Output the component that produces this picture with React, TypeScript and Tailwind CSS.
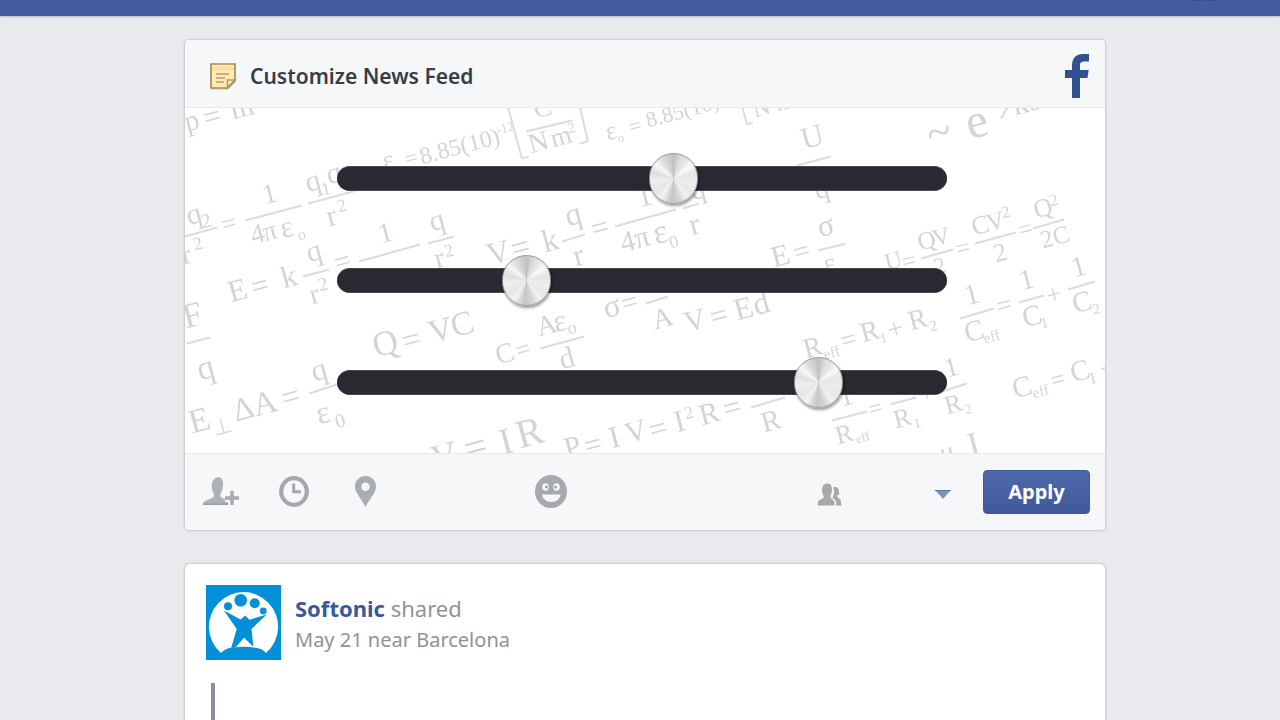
import { useState } from 'react'

type Glyph = [x: number, y: number, size: number, text: string]
type Stroke = [x1: number, y1: number, x2: number, y2: number]

// Chalkboard physics formulas, all written on a slope
const glyphs: Glyph[] = [
  [187, 131, 29, 'p'], [206, 128, 31, '='], [233, 119, 30, 'm'],
  [383, 108, 24, 'v'],
  [308, 192, 30, 'q'], [323, 195, 18, '1'], [329, 184, 30, 'q'], [329, 226, 30, 'r'], [339, 212, 18, '2'],
  [265, 204, 28, '1'], [224, 233, 26, '='], [189, 225, 30, 'q'], [203, 228, 20, '2'], [184, 264, 28, 'r'], [195, 250, 18, '2'],
  [253, 244, 28, '4'], [265, 241, 28, 'π'], [283, 238, 31, 'ε'], [299, 240, 16, 'o'],
  [381, 243, 28, '1'], [432, 231, 30, 'q'], [337, 272, 29, '='], [437, 268, 29, 'r'], [446, 257, 18, '2'],
  [231, 302, 31, 'E'], [254, 297, 31, '='], [284, 288, 31, 'k'], [309, 262, 30, 'q'], [312, 304, 29, 'r'], [320, 291, 19, '2'],
  [186, 328, 35, 'F'], [200, 380, 34, 'q'],
  [192, 433, 34, 'E'], [215, 435, 22, '⊥'], [236, 421, 32, 'Δ'], [256, 416, 33, 'A'], [284, 409, 33, '='],
  [314, 381, 31, 'q'], [319, 424, 32, 'ε'], [337, 428, 20, '0'],
  [376, 357, 35, 'Q'], [405, 352, 33, '='], [432, 343, 33, 'V'], [454, 337, 34, 'C'],
  [435, 470, 36, 'V'], [468, 462, 40, '='], [503, 454, 37, 'I'], [520, 448, 40, 'R'],
  [385, 169, 26, 'ε'], [407, 166, 22, '='], [422, 164, 24, '8.85(10)'], [498, 134, 13, '-12'],
  [536, 118, 27, 'C'], [531, 153, 28, 'N'], [553, 147, 27, 'm'], [569, 133, 15, '2'],
  [608, 140, 26, 'ε'], [619, 142, 12, 'o'], [631, 134, 22, '='], [648, 127, 22, '8.85(10)'], [755, 117, 24, 'N m'],
  [490, 265, 32, 'V'], [514, 260, 34, '='], [545, 252, 32, 'k'], [568, 226, 32, 'q'], [576, 266, 31, 'r'],
  [594, 239, 31, '='], [640, 207, 29, '1'], [623, 252, 29, '4'], [637, 248, 30, 'π'], [656, 244, 34, 'ε'], [671, 248, 18, '0'],
  [693, 200, 29, 'q'], [692, 235, 31, 'r'],
  [804, 149, 31, 'U'], [817, 199, 28, 'q'], [820, 237, 31, 'σ'], [796, 262, 29, '='], [774, 267, 30, 'E'], [826, 273, 28, 'ε'],
  [931, 149, 45, '~'], [970, 139, 49, 'e'], [1015, 115, 32, 'ks'],
  [887, 270, 24, 'U'], [904, 270, 25, '='], [920, 250, 25, 'Q'], [935, 246, 24, 'V'], [936, 274, 23, '2'], [958, 257, 25, '='],
  [974, 235, 26, 'C'], [989, 231, 25, 'V'], [1003, 218, 17, '2'], [996, 262, 26, '2'], [1021, 238, 25, '='],
  [1036, 218, 26, 'Q'], [1051, 206, 17, '2'], [1043, 248, 25, '2C'],
  [967, 305, 29, '1'], [967, 342, 29, 'C'], [985, 343, 15, 'eff'], [999, 315, 27, '='],
  [1022, 290, 29, '1'], [1025, 327, 29, 'C'], [1042, 328, 15, '1'], [1049, 304, 26, '+'],
  [1074, 277, 29, '1'], [1075, 313, 29, 'C'], [1094, 314, 15, '2'],
  [806, 358, 28, 'R'], [825, 359, 15, 'eff'], [843, 350, 28, '='], [863, 342, 28, 'R'], [881, 343, 15, '1'],
  [890, 339, 28, '+'], [911, 330, 28, 'R'], [931, 331, 15, '2'],
  [1015, 398, 29, 'C'], [1034, 398, 15, 'eff'], [1053, 389, 26, '='], [1073, 382, 29, 'C'], [1090, 384, 17, '1'],
  [842, 406, 26, '1'], [838, 444, 26, 'R'], [857, 443, 13, 'eff'], [871, 417, 24, '='], [896, 428, 26, 'R'], [915, 428, 14, '1'],
  [922, 402, 22, '+'], [947, 377, 27, '1'], [947, 414, 26, 'R'], [966, 414, 14, '2'],
  [942, 462, 28, 'μ'], [971, 456, 34, 'I'],
  [498, 364, 28, 'C'], [518, 359, 26, '='], [539, 336, 28, 'A'], [556, 332, 31, 'ε'], [569, 334, 18, 'o'], [562, 369, 30, 'd'],
  [606, 318, 32, 'σ'], [624, 313, 29, '='], [655, 329, 28, 'A'],
  [687, 332, 30, 'V'], [713, 327, 31, '='], [737, 320, 31, 'E'], [756, 315, 32, 'd'],
  [567, 458, 30, 'P'], [587, 456, 31, '='], [612, 448, 31, 'I'], [628, 443, 30, 'V'], [652, 440, 31, '='],
  [677, 432, 31, 'I'], [686, 419, 18, '2'], [702, 425, 30, 'R'], [726, 419, 31, '='], [764, 432, 29, 'R'],
]

const strokes: Stroke[] = [
  [308, 203, 357, 190], [245, 220, 302, 205], [185, 236, 217, 227], [359, 261, 420, 244], [428, 243, 454, 236],
  [303, 276, 329, 269], [187, 343, 210, 337], [309, 393, 337, 384], [526, 131, 572, 120], [562, 241, 585, 234],
  [615, 226, 676, 209], [683, 208, 699, 203], [797, 165, 831, 156], [818, 250, 846, 243], [921, 258, 953, 249],
  [975, 243, 1016, 232], [1033, 228, 1064, 219], [960, 318, 994, 308], [1019, 302, 1044, 295], [1068, 289, 1095, 281],
  [1101, 369, 1106, 367], [832, 420, 867, 411], [890, 404, 916, 397], [942, 391, 967, 383], [540, 348, 584, 336],
  [646, 303, 668, 296], [751, 407, 785, 397], [508, 107, 522, 158], [522, 158, 529, 156], [580, 107, 588, 141],
  [588, 141, 580, 143], [742, 105, 747, 124], [747, 124, 753, 122], [1001, 118, 1008, 106],
]

function FormulaBackdrop() {
  return (
    <svg
      viewBox="185 107 920 346"
      preserveAspectRatio="xMidYMid slice"
      className="pointer-events-none absolute inset-0 h-full w-full blur-[0.5px]"
      aria-hidden="true"
    >
      <g fill="#d4d4d4" className="font-['Liberation_Serif',serif]">
        {glyphs.map(([x, y, size, text], i) => (
          <text key={i} transform={`translate(${x} ${y}) rotate(-15)`} fontSize={size}>
            {text}
          </text>
        ))}
      </g>
      <g stroke="#dcdcdc" strokeWidth="2">
        {strokes.map(([x1, y1, x2, y2], i) => (
          <line key={i} x1={x1} y1={y1} x2={x2} y2={y2} />
        ))}
      </g>
    </svg>
  )
}

function NoteIcon() {
  return (
    <svg width="28" height="28" viewBox="0 0 28 28" aria-hidden="true">
      <defs>
        <linearGradient id="note" x1="0" y1="0" x2="0" y2="1">
          <stop offset="0" stopColor="#fff0bd" />
          <stop offset="0.22" stopColor="#fcd995" />
          <stop offset="0.3" stopColor="#fdeebb" />
          <stop offset="1" stopColor="#fbe7b0" />
        </linearGradient>
      </defs>
      <path d="M2 27h16l7-7" fill="none" stroke="#cfcfd0" strokeWidth="1.5" />
      <path d="M2 2h24v17l-7 7H2z" fill="url(#note)" stroke="#a68c5b" strokeWidth="1.7" />
      <path d="M18.5 25.500v-7.500h7.500z" fill="#fff3cc" stroke="#b3965f" strokeWidth="1.500" />
      <path d="M7 12h13M7 16h9M7 20h8" stroke="#b59b7b" strokeWidth="1.500" />
    </svg>
  )
}

function AddPersonIcon() {
  return (
    <svg width="36" height="30" viewBox="0 0 36 30" aria-hidden="true">
      <path
        d="M0 29v-2.500c2-2 6-3 9-4.500 2.500-1.200 2.500-3.500 1.300-5.300C8.800 14.500 8.300 11 9 7.500 9.800 3.500 12 1.600 15.500 1c3 .5 4.500 3 4.600 6.300.1 3.500-.6 7-2.100 9.400-1 1.600-1 4 .7 5.300l3.300 1V26h3v3z"
        fill="#aeb2b8"
      />
      <path d="M29 15v14M22 22h14" stroke="#a6a9af" strokeWidth="3.500" />
      <path d="M0 28.200h25" stroke="#9b9fa5" strokeWidth="1.400" />
    </svg>
  )
}

function ClockIcon() {
  return (
    <svg width="30" height="31" viewBox="0 0 30 31" aria-hidden="true">
      <ellipse cx="15" cy="15.500" rx="12.800" ry="13.300" fill="none" stroke="#a4a8ae" strokeWidth="4.200" />
      <path d="M14.700 7.500v8.300H22" fill="none" stroke="#a4a8ae" strokeWidth="3" />
    </svg>
  )
}

function PinIcon() {
  return (
    <svg width="22" height="31" viewBox="0 0 22 31" aria-hidden="true">
      <path
        fillRule="evenodd"
        d="M10.500 0C4.500 0 0 4.500 0 10.500 0 17 6 22 10.500 31 15 22 21 17 21 10.500 21 4.500 16.500 0 10.500 0zm0 6.500a4.200 4.200 0 1 1 0 8.400 4.200 4.200 0 0 1 0-8.400z"
        fill="#a8acb3"
      />
    </svg>
  )
}

function SmileIcon() {
  return (
    <svg width="32" height="33" viewBox="0 0 32 33" aria-hidden="true">
      <ellipse cx="16" cy="16.500" rx="16" ry="16.500" fill="#a6aab0" />
      <ellipse cx="10.500" cy="12" rx="3.300" ry="3.700" fill="#f5f7f9" />
      <ellipse cx="21.500" cy="12" rx="3.300" ry="3.700" fill="#f5f7f9" />
      <circle cx="11.500" cy="12" r="1.600" fill="#a6aab0" />
      <circle cx="20.500" cy="12" r="1.600" fill="#a6aab0" />
      <path d="M7 19.500h18.500c-.5 4.800-4.500 7.500-9.200 7.500S7.500 24.300 7 19.500z" fill="#f5f7f9" />
    </svg>
  )
}

function FriendsIcon() {
  return (
    <svg width="24" height="23" viewBox="0 0 24 23" aria-hidden="true">
      <path
        d="M0 22.500v-4c1.500-2 5.500-2.500 5.700-4.500 0-1.500-1.400-3-1.700-5.500C3.800 4 5.500.5 9.300.5s5.200 3.500 4.500 8c-.4 2.500-1.600 4-1.300 6 .8 1.700 3.300 2.300 4 4.500v3.500z"
        fill="#a8a8a8"
      />
      <path
        d="M15 4.500c3.500-1.300 5.800.3 5.800 3.500 0 1.500 1 2.500.5 3.500-1.500.2-2.200 1.200-1.800 2.500 1.500 1.500 3.300 2 3.500 4.500l.3 4h-5c.3-4.500-1.300-6-3.800-7.500 1.500-3 2.500-7 .5-10.500z"
        fill="#a8a8a8"
      />
    </svg>
  )
}

function SoftonicLogo() {
  return (
    <svg width="75" height="75" viewBox="0 0 75 75" role="img" aria-label="Softonic">
      <path d="M0 0h75v75H0z" fill="#0390d8" />
      <path
        d="M15 68A34.600 34.600 0 1 1 60 68Q57 64 51 63 37.700 60.500 25 62.800 18 64 15 68z"
        fill="#fff"
      />
      <g fill="#0390d8">
        <circle cx="22" cy="21.300" r="4" />
        <circle cx="34.700" cy="15.300" r="6.300" />
        <circle cx="48.700" cy="18.300" r="5" />
        <circle cx="57.300" cy="26" r="3.400" />
        <path d="M18 25.500 34.500 34.500 39.300 30.500 43.300 34.700 60.700 29.500 45.500 44 47.300 61.500 38 52.700 30 62 25 63.500 30.700 44z" />
      </g>
    </svg>
  )
}

const composerActions = [
  { label: 'Tag people', Icon: AddPersonIcon, spacing: 'w-[36px]' },
  { label: 'Add time', Icon: ClockIcon, spacing: 'ml-10 w-[30px]' },
  { label: 'Add location', Icon: PinIcon, spacing: 'ml-[46px] w-[22px]' },
  { label: 'Add feeling', Icon: SmileIcon, spacing: 'ml-[158px] w-[32px]' },
]

const sliders = [
  { id: 'friends', label: 'Friends', value: 55.7 },
  { id: 'pages', label: 'Pages', value: 29.4 },
  { id: 'groups', label: 'Groups', value: 81.4 },
]

function FeedSlider({ label, initial }: { label: string; initial: number }) {
  const [value, setValue] = useState(initial)
  return (
    <input
      type="range"
      aria-label={label}
      min={0}
      max={100}
      step={0.1}
      value={value}
      onChange={(e) => setValue(Number(e.target.value))}
      className="block h-[25px] w-full appearance-none rounded-full border-y border-[#4a4b50] bg-[#282931] [&::-webkit-slider-thumb]:h-[51px] [&::-webkit-slider-thumb]:w-[49px] [&::-webkit-slider-thumb]:appearance-none [&::-webkit-slider-thumb]:rounded-full [&::-webkit-slider-thumb]:border [&::-webkit-slider-thumb]:border-[#98989a] [&::-webkit-slider-thumb]:bg-[conic-gradient(#c0c0c0,#dedede_20deg,#e6e6e6_35deg,#fafafa_52deg,#e6e6e6_75deg,#ededed_105deg,#e8e8e8_130deg,#f2f2f2_145deg,#d4d4d5_165deg,#c6c6c8_185deg,#f2f2f2_212deg,#e6e6e6_235deg,#efefef_265deg,#dedede_285deg,#f8f8f8_310deg,#dcdcdc_330deg,#cecece_348deg,#c0c0c0)] [&::-webkit-slider-thumb]:shadow-[1px_2px_3px_rgba(0,0,0,0.4)]"
    />
  )
}

export default function App() {
  return (
    <div className="flex h-screen flex-col overflow-hidden bg-[#e8eaee] font-['Noto_Sans','Open_Sans',sans-serif]">
      <header className="flex h-4 shrink-0 items-start justify-end gap-[3px] bg-[#445c9f] pr-[63px] shadow-[0_1px_2px_rgba(0,0,0,0.2)]">
        <span className="h-px w-[11px] rounded-b bg-[#3a4c85]" />
        <span className="h-px w-[11px] rounded-b bg-[#3a4c85]" />
      </header>

      <main className="flex flex-1 flex-col gap-[34px] pt-6 pr-[175px] pl-[185px]">
        {/* Feed settings */}
        <section className="shrink-0 overflow-hidden rounded-[4px] bg-[#f5f7f9] shadow-[0_0_2px_1px_rgba(0,0,0,0.15)]">
          <div className="flex h-[67px] items-center pt-1 pr-4 pl-6">
            <NoteIcon />
            <h1 className="ml-[13px] pt-px text-[21px] leading-7 font-semibold text-[#373e44]">Customize News Feed</h1>
            <svg className="ml-auto" width="24" height="44" viewBox="0 0 24 44" aria-label="Facebook" role="img">
              <path d="M7 44V24H0v-8h7v-4C7 4 11 0 18 0h6v7.500h-4c-4 0-5 1-5 4V16h8.700L22.500 24H15v20z" fill="#325190" />
            </svg>
          </div>

          <div className="relative overflow-hidden border-y border-[#e9eaed] bg-white pt-[58px] pr-[158px] pb-[58px] pl-[152px]">
            <FormulaBackdrop />
            <div className="relative flex flex-col gap-[77px]">
              {sliders.map((s) => (
                <FeedSlider key={s.id} label={s.label} initial={s.value} />
              ))}
            </div>
          </div>

          <div className="flex h-[76px] items-center pr-[15px] pl-[18px]">
            <div className="flex pb-[2px]">
              {composerActions.map(({ label, Icon, spacing }) => (
                <button key={label} type="button" aria-label={label} className={`flex h-8 shrink-0 items-center ${spacing}`}>
                  <Icon />
                </button>
              ))}
            </div>
            <div className="relative ml-auto flex h-9 w-[133px] items-center justify-between pt-1">
              <FriendsIcon />
              <svg width="16" height="9" viewBox="0 0 16 9" aria-hidden="true">
                <path d="M0 0h16L8 9z" fill="#7b8fc2" />
                <path d="M0 .5h16" stroke="#6076ad" />
              </svg>
              <select aria-label="Audience" defaultValue="" className="absolute inset-0 h-full w-full appearance-none bg-transparent">
                <option value="" />
                <option value="friends">Friends</option>
                <option value="public">Public</option>
              </select>
            </div>
            <button
              type="button"
              className="ml-8 h-11 w-[107px] shrink-0 rounded-[4px] border border-[#43599a] bg-linear-to-b from-[#4e68a9] to-[#425a9d] text-[20px] leading-6 font-bold text-white"
            >
              Apply
            </button>
          </div>
        </section>

        {/* Shared post */}
        <article className="flex-1 rounded-t-[5px] bg-white pt-[21px] pl-[21px] shadow-[0_0_2px_1px_rgba(0,0,0,0.15)]">
          <div className="flex gap-[14px]">
            <SoftonicLogo />
            <div className="pt-[7px]">
              <p className="text-[22px] leading-8 text-[#8c939d]">
                <a href="#softonic" className="font-bold text-[#3b5998]">
                  Softonic
                </a>{' '}
                shared
              </p>
              <p className="text-[20px] leading-8 text-[#8c939d]">May 21 near Barcelona</p>
            </div>
          </div>
          <blockquote className="mt-[23px] ml-[5px] h-24 border-l-4 border-[#8b8fa3]" />
        </article>
      </main>
    </div>
  )
}
